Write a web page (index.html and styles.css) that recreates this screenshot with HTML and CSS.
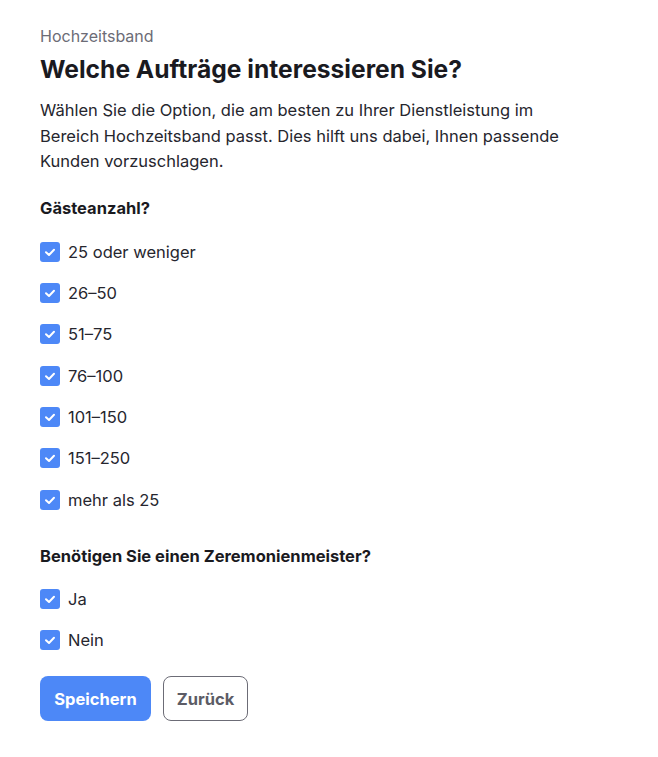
FILE: index.html
```html
<!DOCTYPE html>
<html lang="de">
<head>
<meta charset="utf-8">
<link rel="stylesheet" href="styles.css">
</head>
<body>
<main class="page">
  <div class="eyebrow">Hochzeitsband</div>
  <h1 class="title">Welche Aufträge interessieren Sie?</h1>
  <p class="intro">Wählen Sie die Option, die am besten zu Ihrer Dienstleistung im Bereich Hochzeitsband passt. Dies hilft uns dabei, Ihnen passende Kunden vorzuschlagen.</p>

  <section class="group">
    <h2 class="question">Gästeanzahl?</h2>
    <ul class="options">
      <li class="option"><span class="box"><svg viewBox="0 0 20 20"><path d="M6 10.2l3 2.8 5-5.2"/></svg></span><span class="label">25 oder weniger</span></li>
      <li class="option"><span class="box"><svg viewBox="0 0 20 20"><path d="M6 10.2l3 2.8 5-5.2"/></svg></span><span class="label">26–50</span></li>
      <li class="option"><span class="box"><svg viewBox="0 0 20 20"><path d="M6 10.2l3 2.8 5-5.2"/></svg></span><span class="label">51–75</span></li>
      <li class="option"><span class="box"><svg viewBox="0 0 20 20"><path d="M6 10.2l3 2.8 5-5.2"/></svg></span><span class="label">76–100</span></li>
      <li class="option"><span class="box"><svg viewBox="0 0 20 20"><path d="M6 10.2l3 2.8 5-5.2"/></svg></span><span class="label">101–150</span></li>
      <li class="option"><span class="box"><svg viewBox="0 0 20 20"><path d="M6 10.2l3 2.8 5-5.2"/></svg></span><span class="label">151–250</span></li>
      <li class="option"><span class="box"><svg viewBox="0 0 20 20"><path d="M6 10.2l3 2.8 5-5.2"/></svg></span><span class="label">mehr als 25</span></li>
    </ul>
  </section>

  <section class="group">
    <h2 class="question">Benötigen Sie einen Zeremonienmeister?</h2>
    <ul class="options options-short">
      <li class="option"><span class="box"><svg viewBox="0 0 20 20"><path d="M6 10.2l3 2.8 5-5.2"/></svg></span><span class="label">Ja</span></li>
      <li class="option"><span class="box"><svg viewBox="0 0 20 20"><path d="M6 10.2l3 2.8 5-5.2"/></svg></span><span class="label">Nein</span></li>
    </ul>
  </section>

  <div class="actions">
    <button class="btn btn-primary">Speichern</button>
    <button class="btn btn-secondary">Zurück</button>
  </div>
</main>
</body>
</html>
```

FILE: styles.css
```css
* { box-sizing: border-box; }
html, body { margin: 0; padding: 0; background: #fff; }
body {
  font-family: "Inter", "Noto Sans", sans-serif;
  color: #26262e;
  font-size: 16.5px;
}
.page {
  padding: 26px 40px 30px 40px;
  width: 658px;
}
.eyebrow {
  color: #6c6c76;
  font-size: 16px;
  line-height: 20px;
}
.title {
  margin: 8px 0 0 0;
  font-size: 24.6px;
  line-height: 30px;
  font-weight: 700;
  color: #1a1a1f;
}
.intro {
  margin: 14px 0 0 0;
  width: 520px;
  font-size: 16.5px;
  line-height: 25.5px;
}
.group { margin-top: 23px; }
.group + .group { margin-top: 36px; }
.question {
  margin: 0;
  font-size: 16.5px;
  line-height: 20px;
  font-weight: 700;
  color: #1a1a1f;
}
.options {
  list-style: none;
  margin: 24px 0 0 0;
  padding: 0;
  display: flex;
  flex-direction: column;
  gap: 21.4px;
}
.options-short { margin-top: 23px; }
.option {
  display: flex;
  align-items: center;
  gap: 8px;
  height: 20px;
}
.box {
  width: 20px;
  height: 20px;
  border-radius: 3px;
  background: #4d88f7;
  display: flex;
  flex: none;
}
.box svg {
  width: 20px;
  height: 20px;
  fill: none;
  stroke: #fff;
  stroke-width: 2;
  stroke-linecap: round;
  stroke-linejoin: round;
}
.label {
  font-size: 16.5px;
  line-height: 20px;
  color: #26262e;
}
.actions {
  display: flex;
  gap: 12px;
  margin-top: 26px;
}
.btn {
  font-family: inherit;
  font-size: 16.5px;
  font-weight: 700;
  height: 45px;
  border-radius: 8px;
  padding: 0 10px;
  cursor: pointer;
}
.btn-primary {
  background: #4d88f7;
  color: #fff;
  border: none;
  width: 111px;
}
.btn-secondary {
  background: #fff;
  color: #5c5c66;
  border: 1px solid #6c6c76;
  width: 85px;
}
```
